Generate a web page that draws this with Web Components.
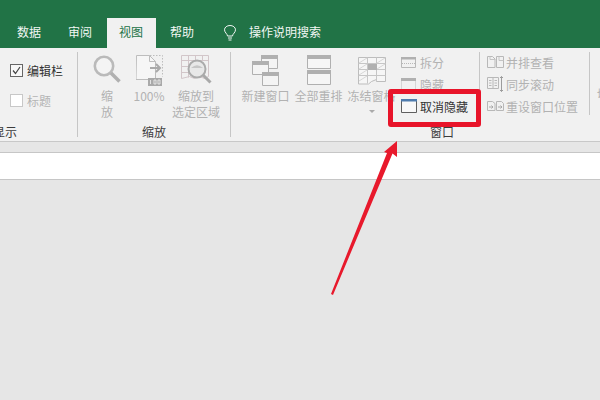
<!DOCTYPE html>
<html>
<head>
<meta charset="utf-8">
<style>
  html, body { margin: 0; height: 100%; }
  body {
    width: 600px; height: 400px; overflow: hidden; position: relative;
    background: #e6e6e6;
    font: 12px "Noto Sans CJK SC", "Liberation Sans", sans-serif;
    display: flex; flex-direction: column;
  }
</style>
</head>
<body>
<tab-bar></tab-bar>
<ribbon-bar>
  <ribbon-group label="显示" style="--w:78px" data-align="end">
    <check-row checked>编辑栏</check-row>
    <check-row>标题</check-row>
  </ribbon-group>
  <ribbon-group label="缩放" style="--w:153px">
    <big-btn style="--bw:50px" icon="zoom">缩<br>放</big-btn>
    <big-btn style="--bw:34px" icon="pct">100%</big-btn>
    <big-btn style="--bw:60px" icon="sel">缩放到<br>选定区域</big-btn>
  </ribbon-group>
  <ribbon-group label="窗口" style="--w:422px" data-last>
    <big-btn style="--bw:53px" icon="neww">新建窗口</big-btn>
    <big-btn style="--bw:53px" icon="arrange">全部重排</big-btn>
    <big-btn style="--bw:53px" icon="freeze" caret>冻结窗格</big-btn>
    <small-col style="--cw:81px">
      <small-btn icon="split">拆分</small-btn>
      <small-btn icon="hide">隐藏</small-btn>
      <small-btn icon="unhide" active>取消隐藏</small-btn>
    </small-col>
    <small-col style="--cw:110px" divided>
      <small-btn icon="side">并排查看</small-btn>
      <small-btn icon="sync">同步滚动</small-btn>
      <small-btn icon="reset">重设窗口位置</small-btn>
    </small-col>
    <last-btn>切换窗口</last-btn>
  </ribbon-group>
</ribbon-bar>
<sheet-area></sheet-area>
<call-out></call-out>

<script>
  const ICONS = {
    zoom: `<svg width="28" height="28" viewBox="0 0 28 28" fill="none"><circle cx="11" cy="11" r="9.200" stroke="#bababa" stroke-width="2.600" fill="#f4f4f4"/><path d="M18 18l8.500 8.500" stroke="#b0b0b0" stroke-width="3.600"/></svg>`,
    pct: `<svg width="27" height="31" viewBox="0 0 27 31" fill="none"><path d="M.5 .5h13l6 6v18h-19.500z" stroke="#bdbdbd" fill="#f6f6f6"/><path d="M13.500 .5v6h6" stroke="#bdbdbd"/><path d="M14 .5h12.500v21" stroke="#bdbdbd" stroke-dasharray="1.500 1.500"/><path d="M14 13h10M20 9l4 4-4 4" stroke="#a9a9a9" stroke-width="2"/><rect x="12" y="23" width="14" height="8" fill="#a9a9a9"/><path d="M14.500 25v4M18 25h2v4h-2zM22 25h2v4h-2z" stroke="#f1f1f1" stroke-width=".8"/></svg>`,
    sel: `<svg width="31" height="29" viewBox="0 0 31 29" fill="none"><path d="M.5 .5h27v21l-4 2-5-2-5 2-5-2-8 2z" stroke="#d2c6c9"/><path d="M.5 5.500h27M.5 11.500h8M.5 17.500h8M7.500 .5v22M14.500 .5v5M21.500 .5v5" stroke="#d2c6c9"/><circle cx="16" cy="14" r="8.500" fill="#e8e8e8" stroke="#ababab" stroke-width="2"/><path d="M10 13q6-5.500 12 0" fill="#c6c6c6"/><path d="M22 20l7.500 7.500" stroke="#a9a9a9" stroke-width="3"/></svg>`,
    neww: `<svg width="28" height="31" viewBox="0 0 28 31" fill="none"><path d="M9.500 .5h16v13h-16z" stroke="#b0b0b0" fill="#f4f4f4"/><path d="M9 0h17v4h-17z" fill="#b0b0b0"/><path d="M.5 6.500h16v13h-16z" stroke="#b0b0b0" fill="#f4f4f4"/><path d="M0 6h17v4h-17z" fill="#b0b0b0"/><path d="M10.500 17.500h16v13h-16z" stroke="#b0b0b0" fill="#f4f4f4"/><path d="M10 17h17v4h-17z" fill="#b0b0b0"/></svg>`,
    arrange: `<svg width="24" height="30" viewBox="0 0 24 30" fill="none"><path d="M.5 .5h23v13h-23zM.5 15.500h23v14h-23z" stroke="#b0b0b0" fill="#f6f6f6"/><path d="M0 0h24v4h-24zM0 15h24v4h-24z" fill="#b0b0b0"/></svg>`,
    freeze: `<svg width="28" height="28" viewBox="0 0 28 28" style="margin-top:2px" fill="none"><path d="M.5 .5h27v24h-9v-2l-5 2-3 2.500h-10z" stroke="#bdbdbd" fill="#f6f6f6"/><path d="M.5 6.500h27M.5 12.500h27M.5 18.500h27M9.500 .5v26M18.500 .5v24" stroke="#c6c6c6"/><path d="M10 7h9v6h-9z" fill="#b0b0b0"/><path d="M1 6l8-5M1 12l8-5M1 18l8-5M1 24l8-5M19 6l8-5M19 12l8-5" stroke="#d6d6d6"/></svg>`,
    split: `<svg width="15" height="11" viewBox="0 0 15 11" fill="none"><path d="M.5 .5h14v10h-14z" stroke="#b8b8b8"/><path d="M0 0h15v2.500h-15z" fill="#b0b0b0"/><path d="M1 6.500h13" stroke="#b8b8b8" stroke-dasharray="1 1"/></svg>`,
    hide: `<svg width="15" height="12" viewBox="0 0 15 12" fill="none"><path d="M.5 11.500v-11h14v11z" stroke="#b8b8b8" stroke-dasharray="1 1"/><path d="M0 0h15v3h-15z" fill="#b0b0b0"/></svg>`,
    unhide: `<svg width="16" height="14" viewBox="0 0 16 14" fill="none"><path d="M.5 .5h15v13h-15z" stroke="#5f5f5f" fill="#f8f8f8"/><path d="M0 0h16v2.500h-16z" fill="#4f7cae"/></svg>`,
    side: `<svg width="17" height="12" viewBox="0 0 17 12" fill="none"><path d="M.5 .5h5l2.500 2.500v8.500h-7.500z" stroke="#b8b8b8"/><path d="M9.500 .5h7v11h-7z" stroke="#b8b8b8"/><path d="M3 .5v3h5M12 .5v4h4.500" stroke="#c4c4c4"/></svg>`,
    sync: `<svg width="17" height="16" viewBox="0 0 17 16" fill="none"><path d="M.5 1.500h11v11h-11zM6 1.500v11M2 4.500h2.500M2 7h2.500M2 9.500h2.500M7.500 4.500h2.500M7.500 7h2.500M7.500 9.500h2.500" stroke="#b8b8b8"/><path d="M14.500 .5v15M13 2l1.500-1.500L16 2M13 14l1.500 1.500L16 14" stroke="#9c9c9c"/></svg>`,
    reset: `<svg width="17" height="10" viewBox="0 0 17 10" fill="none"><path d="M.5 .5h5l2.500 2v7h-7.500zM9.500 .5h5l2 2v7h-7z" stroke="#b8b8b8"/><path d="M2 6h4M4.500 4.500l1.500 1.500-1.500 1.500M11 6h4M13.500 4.500l1.500 1.500-1.500 1.500" stroke="#a8a8a8"/></svg>`
  };

  class TabBar extends HTMLElement {
    constructor() {
      super();
      this.attachShadow({ mode: "open" }).innerHTML = `
        <style>
          :host { display: flex; height: 48px; flex: none; background: #217346; align-items: flex-end; color: #f2f7f4; font-size: 12px; }
          .tab { height: 30px; line-height: 28px; padding: 0 13px; box-sizing: border-box; }
          .first { padding: 0 14px 0 17px; }
          .on { background: #f1f1f1; color: #217346; width: 49px; padding: 0 12px; margin: 0 1px 0 2px; }
          .bulb { display: flex; align-items: center; height: 30px; margin: 0 13px 0 17px; }
        </style>
        <div class="tab first">数据</div>
        <div class="tab">审阅</div>
        <div class="tab on">视图</div>
        <div class="tab">帮助</div>
        <div class="bulb"><svg width="12" height="16" viewBox="0 0 12 16" fill="none" stroke="#f2f7f4"><path d="M3.500 11c0-2-3-3.500-3-6.200C.5 2.300 3 .5 6 .5s5.500 1.800 5.500 4.300c0 2.700-3 4.200-3 6.200z"/><path d="M4 13h4M4.500 15h3"/></svg></div>
        <div class="tab" style="padding:0">操作说明搜索</div>
      `;
    }
  }

  class RibbonBar extends HTMLElement {
    constructor() {
      super();
      this.attachShadow({ mode: "open" }).innerHTML = `
        <style>
          :host { display: flex; height: 94px; flex: none; background: #f1f1f1; overflow: hidden; box-sizing: border-box; padding-top: 4px; border-bottom: 1px solid #c8c8c8; }
        </style>
        <slot></slot>
      `;
    }
  }

  class RibbonGroup extends HTMLElement {
    constructor() {
      super();
      const label = this.getAttribute("label");
      this.attachShadow({ mode: "open" }).innerHTML = `
        <style>
          :host { display: grid; grid-template-rows: 74px 11px; grid-template-columns: minmax(0, 1fr); flex: none; width: var(--w); box-sizing: border-box; border-right: 1px solid #c6c6c6; margin-bottom: 4px; }
          :host([data-last]) { border-right: 0; }
          .body { display: flex; min-width: 0; }
          :host([label="缩放"]) .body { padding-left: 4px; }
          :host([label="窗口"]) .body { padding-left: 8px; }
          .label { display: flex; justify-content: center; align-items: center; color: #3c3c3c; font-size: 12px; line-height: 16px; white-space: nowrap; }
          :host([data-align="end"]) .label { justify-content: flex-start; }
          :host([data-align="end"]) .label span { margin-left: -7px; }
          :host([data-align="end"]) .body { flex-direction: column; padding: 9px 0 0 10px; gap: 12px; }
        </style>
        <div class="body"><slot></slot></div>
        <div class="label"><span>${label}</span></div>
      `;
    }
  }

  class CheckRow extends HTMLElement {
    constructor() {
      super();
      const on = this.hasAttribute("checked");
      this.attachShadow({ mode: "open" }).innerHTML = `
        <style>
          :host { display: flex; align-items: center; gap: 4px; height: 18px; color: ${on ? "#333" : "#b4b4b4"}; white-space: nowrap; }
          .box { width: 13px; height: 13px; box-sizing: border-box; border: 1px solid ${on ? "#666" : "#c8c8c8"}; background: ${on ? "#f8f8f8" : "#fff"}; display: flex; }
        </style>
        <div class="box">${on ? `<svg width="11" height="11" viewBox="0 0 11 11" fill="none"><path d="M2 5.500l2.500 3 4.500-6.500" stroke="#444" stroke-width="1.200"/></svg>` : ""}</div>
        <slot></slot>
      `;
    }
  }

  class BigBtn extends HTMLElement {
    constructor() {
      super();
      const icon = ICONS[this.getAttribute("icon")] || "";
      const caret = this.hasAttribute("caret");
      this.attachShadow({ mode: "open" }).innerHTML = `
        <style>
          :host { display: flex; flex-direction: column; align-items: center; flex: none; width: var(--bw); color: #b2b2b2; font-size: 12px; line-height: 16px; text-align: center; white-space: nowrap; padding-top: 3px; box-sizing: border-box; }
          .ic { height: 31px; display: flex; align-items: flex-start; justify-content: center; }
          .tx { margin-top: 2px; }
          .caret { width: 0; height: 0; margin-top: 6px; border: 3px solid transparent; border-top: 3px solid #aaa; border-bottom: 0; }
        </style>
        <div class="ic">${icon}</div>
        <div class="tx"><slot></slot></div>
        ${caret ? `<div class="caret"></div>` : ""}
      `;
    }
  }

  // the next button is cut by the window edge, only its label shows
  class LastBtn extends HTMLElement {
    constructor() {
      super();
      this.attachShadow({ mode: "open" }).innerHTML = `
        <style>
          :host { display: block; flex: none; box-sizing: border-box; height: 63px; border-left: 1px solid #c6c6c6; padding: 34px 0 0 7px; color: #b2b2b2; line-height: 16px; white-space: nowrap; }
        </style>
        <slot></slot>
      `;
    }
  }

  class SmallCol extends HTMLElement {
    constructor() {
      super();
      this.attachShadow({ mode: "open" }).innerHTML = `
        <style>
          :host { display: flex; flex-direction: column; flex: none; width: var(--cw); height: 63px; box-sizing: border-box; padding: 1px 0 0 3px; gap: 4px; white-space: nowrap; }
          :host([divided]) { border-left: 1px solid #c6c6c6; padding-left: 7px; }
        </style>
        <slot></slot>
      `;
    }
  }

  class SmallBtn extends HTMLElement {
    constructor() {
      super();
      const icon = ICONS[this.getAttribute("icon")] || "";
      this.attachShadow({ mode: "open" }).innerHTML = `
        <style>
          :host { display: flex; align-items: center; gap: 2px; height: 19px; color: #b2b2b2; font-size: 12px; }
          :host([active]) { color: #333; }
          .ic { width: 17px; display: flex; align-items: center; }
        </style>
        <div class="ic">${icon}</div>
        <slot></slot>
      `;
    }
  }

  class SheetArea extends HTMLElement {
    constructor() {
      super();
      this.attachShadow({ mode: "open" }).innerHTML = `
        <style>
          :host { display: flex; flex-direction: column; flex: 1; background: #e6e6e6; }
          .strip { height: 11px; box-sizing: border-box; background: #e6e6e6; border-bottom: 1px solid #c6c6c6; }
          .bar { height: 27px; box-sizing: border-box; background: #fff; border-bottom: 1px solid #c6c6c6; }
        </style>
        <div class="strip"></div>
        <div class="bar"></div>
      `;
    }
  }

  // red annotation drawn over the screenshot
  class CallOut extends HTMLElement {
    constructor() {
      super();
      this.attachShadow({ mode: "open" }).innerHTML = `
        <style>
          :host { display: block; }
          .box { position: absolute; left: 388px; top: 89px; width: 93px; height: 38px; box-sizing: border-box; border: 5px solid #e8142a; border-radius: 3px; }
          svg { position: absolute; left: 0; top: 0; }
        </style>
        <div class="box"></div>
        <svg width="600" height="400" viewBox="0 0 600 400"><polygon fill="#e8192c" points="331,294 387,153 384,152 397,141 397,157 392.500,153.500 333,295"/></svg>
      `;
    }
  }

  customElements.define("tab-bar", TabBar);
  customElements.define("ribbon-bar", RibbonBar);
  customElements.define("ribbon-group", RibbonGroup);
  customElements.define("check-row", CheckRow);
  customElements.define("big-btn", BigBtn);
  customElements.define("last-btn", LastBtn);
  customElements.define("small-col", SmallCol);
  customElements.define("small-btn", SmallBtn);
  customElements.define("sheet-area", SheetArea);
  customElements.define("call-out", CallOut);
</script>
</body>
</html>
